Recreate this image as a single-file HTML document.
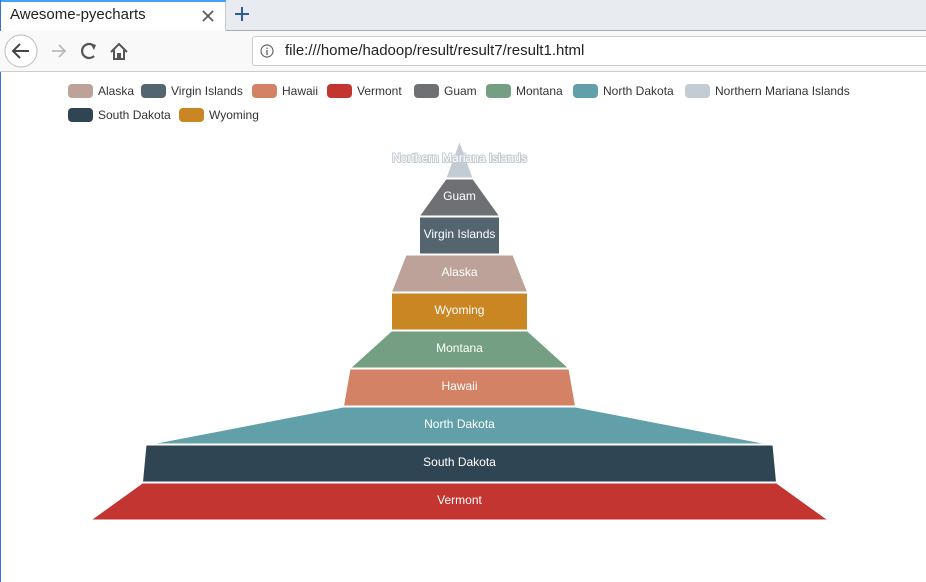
<!DOCTYPE html>
<html><head><meta charset="utf-8"><style>
body{margin:0;width:926px;height:582px;overflow:hidden;background:#fff;font-family:"Liberation Sans",sans-serif;position:relative}
.abs{position:absolute}
.leg{position:absolute;font-size:12px;color:#333;white-space:nowrap;line-height:14px}
.leg i{display:inline-block;width:25px;height:14px;border-radius:4px;vertical-align:top;margin-right:5px}
</style></head><body>
<div class="abs" style="left:0;top:0;width:926px;height:31px;background:#e8ecf0;border-bottom:1px solid #a8adb3;box-sizing:border-box"></div>
<div class="abs" style="left:0;top:0;width:226px;height:31px;background:#fff;border-right:1px solid #c8ccd0;box-sizing:border-box"></div>
<div class="abs" style="left:0;top:0;width:226px;height:2px;background:#45a1ff"></div>
<div class="abs" style="left:0;top:0;width:1px;height:582px;background:#3a6fd6"></div>
<div class="abs" style="left:10px;top:6px;font-size:15px;color:#222">Awesome-pyecharts</div>
<svg class="abs" style="left:200px;top:8px" width="16" height="16"><path d="M3 3L13 13M13 3L3 13" stroke="#555" stroke-width="1.6"/></svg>
<svg class="abs" style="left:233px;top:5px" width="18" height="18"><path d="M9 2V16M2 9H16" stroke="#2a5d9a" stroke-width="2"/></svg>
<div class="abs" style="left:0;top:31px;width:926px;height:41px;background:#f9f9fa;border-bottom:1px solid #ccc;box-sizing:border-box"></div>
<svg class="abs" style="left:3px;top:34px" width="130" height="36">
<circle cx="18" cy="17" r="16" fill="#fff" stroke="#bbb"/>
<path d="M26 17H11M17 10L10 17L17 24" stroke="#444" stroke-width="2" fill="none"/>
<path d="M63 17H49M56 11L62 17L56 23" stroke="#bbb" stroke-width="1.8" fill="none"/>
<path d="M91 12A7 7 0 1 0 91 22" stroke="#555" stroke-width="2.2" fill="none"/><path d="M87 9L93 11L91 16Z" fill="#555"/>
<path d="M108 18L116 10L124 18M111 16V25H121V16" stroke="#555" stroke-width="2" fill="none"/><rect x="114" y="19" width="4" height="6" fill="#555"/>
</svg>
<div class="abs" style="left:252px;top:36px;width:690px;height:30px;background:#fff;border:1px solid #ccc;border-radius:3px;box-sizing:border-box"></div>
<svg class="abs" style="left:260px;top:44px" width="14" height="14"><circle cx="7" cy="7" r="6" fill="none" stroke="#666" stroke-width="1.2"/><path d="M7 6V11M7 3.5V5" stroke="#666" stroke-width="1.4"/></svg>
<div class="abs" style="left:285px;top:42px;font-size:15px;color:#222">file:///home/hadoop/result/result7/result1.html</div>

<div class="leg" style="left:68px;top:84px"><i style="background:#bda29a"></i>Alaska</div>
<div class="leg" style="left:141px;top:84px"><i style="background:#546570"></i>Virgin Islands</div>
<div class="leg" style="left:252px;top:84px"><i style="background:#d48265"></i>Hawaii</div>
<div class="leg" style="left:327px;top:84px"><i style="background:#c23531"></i>Vermont</div>
<div class="leg" style="left:414px;top:84px"><i style="background:#6e7074"></i>Guam</div>
<div class="leg" style="left:486px;top:84px"><i style="background:#749f83"></i>Montana</div>
<div class="leg" style="left:573px;top:84px"><i style="background:#61a0a8"></i>North Dakota</div>
<div class="leg" style="left:685px;top:84px"><i style="background:#c4ccd3"></i>Northern Mariana Islands</div>
<div class="leg" style="left:68px;top:108px"><i style="background:#2f4554"></i>South Dakota</div>
<div class="leg" style="left:179px;top:108px"><i style="background:#ca8622"></i>Wyoming</div>

<svg class="abs" style="left:0;top:0" width="926" height="582" font-family="Liberation Sans, sans-serif" font-size="12" text-anchor="middle" fill="#fff">
<g stroke="#fff" stroke-width="1">
<polygon points="459.5,141 473,178 446,178" fill="#c4ccd3"/>
<polygon points="446,179 473,179 499.5,216 419.5,216" fill="#6e7074"/>
<polygon points="419.5,217 499.5,217 499.5,254 419.5,254" fill="#546570"/>
<polygon points="406,255 513,255 527.5,292 391.5,292" fill="#bda29a"/>
<polygon points="391.5,293 527.5,293 527.5,330 391.5,330" fill="#ca8622"/>
<polygon points="391.5,331 527.5,331 568.5,368 350.5,368" fill="#749f83"/>
<polygon points="350,369 569,369 575.5,406 343.5,406" fill="#d48265"/>
<polygon points="343.5,407 575.5,407 767.5,444 151.5,444" fill="#61a0a8"/>
<polygon points="146,445 773,445 776.5,482 142.5,482" fill="#2f4554"/>
<polygon points="142.5,483 776.5,483 828,520 91,520" fill="#c23531"/>
</g>
<text x="459.5" y="162" fill="#fff" stroke="#c4ccd3" stroke-width="2" paint-order="stroke">Northern Mariana Islands</text>
<text x="459.5" y="200">Guam</text>
<text x="459.5" y="238">Virgin Islands</text>
<text x="459.5" y="276">Alaska</text>
<text x="459.5" y="314">Wyoming</text>
<text x="459.5" y="352">Montana</text>
<text x="459.5" y="390">Hawaii</text>
<text x="459.5" y="428">North Dakota</text>
<text x="459.5" y="466">South Dakota</text>
<text x="459.5" y="504">Vermont</text>
</svg>
</body></html>
